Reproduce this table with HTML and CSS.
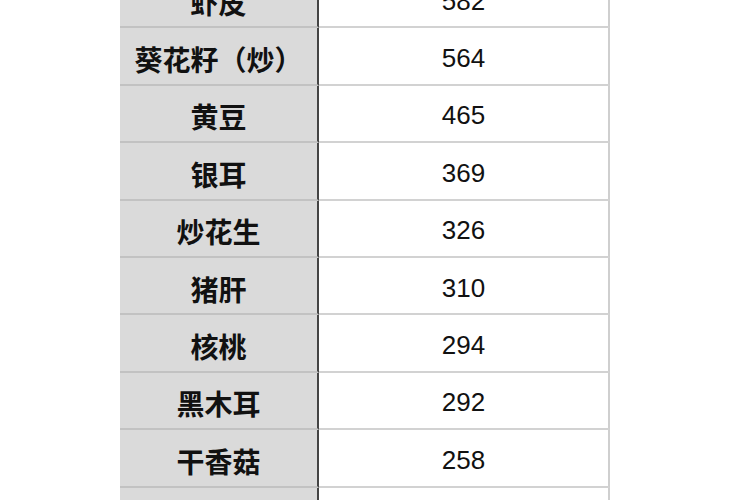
FILE: index.html
```html
<!DOCTYPE html>
<html lang="zh">
<head>
<meta charset="utf-8">
<link rel="stylesheet" href="styles.css">
</head>
<body>
<div class="table">
  <div class="row"><div class="name">虾皮</div><div class="val">582</div></div>
  <div class="row"><div class="name">葵花籽（炒）</div><div class="val">564</div></div>
  <div class="row"><div class="name">黄豆</div><div class="val">465</div></div>
  <div class="row"><div class="name">银耳</div><div class="val">369</div></div>
  <div class="row"><div class="name">炒花生</div><div class="val">326</div></div>
  <div class="row"><div class="name">猪肝</div><div class="val">310</div></div>
  <div class="row"><div class="name">核桃</div><div class="val">294</div></div>
  <div class="row"><div class="name">黑木耳</div><div class="val">292</div></div>
  <div class="row"><div class="name">干香菇</div><div class="val">258</div></div>
  <div class="row"><div class="name">&nbsp;</div><div class="val">&nbsp;</div></div>
</div>
</body>
</html>
```
FILE: styles.css
```css
html, body {
  margin: 0;
  padding: 0;
  background: #ffffff;
  overflow: hidden;
}
.table {
  margin-top: -29px;
  margin-left: 120px;
  width: 490px;
  display: flex;
  flex-direction: column;
}
.row {
  display: flex;
  height: 57.4px;
}
.name, .val {
  box-sizing: border-box;
  display: flex;
  align-items: center;
  justify-content: center;
  color: #111;
}
.name {
  width: 199px;
  background: #dadada;
  border-right: 2px solid #444;
  border-bottom: 2px solid #c2c2c2;
  font-family: "Noto Sans CJK SC", sans-serif;
  font-weight: 700;
  font-size: 28px;
  padding-top: 6px;
}
.val {
  flex: 1;
  background: #fff;
  border-right: 2px solid #cfcfcf;
  border-bottom: 2px solid #d2d2d2;
  font-family: "Liberation Sans", Arial, sans-serif;
  font-size: 26px;
  padding-top: 5px;
}
```
